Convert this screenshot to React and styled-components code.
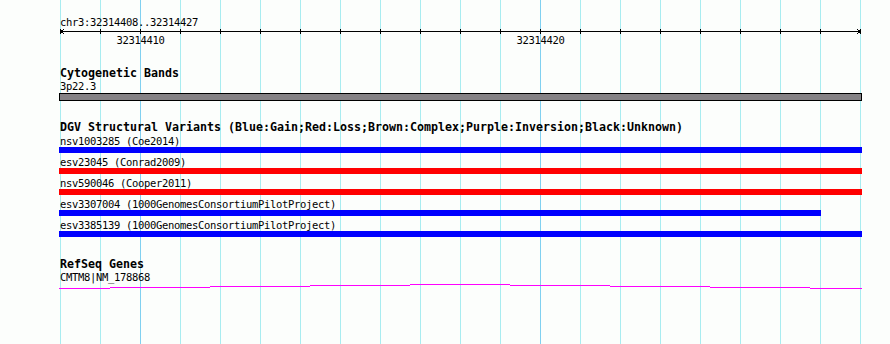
import React from 'react';
import styled, { createGlobalStyle } from 'styled-components';

const GlobalStyle = createGlobalStyle`
  html, body {
    margin: 0;
    padding: 0;
    background: #fcfefc;
  }
`;

const Page = styled.div`
  width: 890px;
  height: 344px;
  overflow: hidden;
  background: #fcfefc;
  font-family: "DejaVu Sans Mono", "Liberation Mono", monospace;
  color: #000;
`;

// the panel holds every track; grid lines at each 40px, major lines at the decade marks
const Panel = styled.div`
  margin-left: 59px;
  width: 803px;
  height: 344px;
  box-sizing: border-box;
  padding-top: 16px;
  background-image:
    linear-gradient(to right,
      transparent 81px, #80d0f0 81px, #80d0f0 82px, transparent 82px,
      transparent 481px, #80d0f0 481px, #80d0f0 482px, transparent 482px),
    repeating-linear-gradient(to right,
      transparent 0, transparent 1px, #a8ecf0 1px, #a8ecf0 2px, transparent 2px, transparent 40px);
  background-size: 100% 100%, 841px 100%;
  background-repeat: no-repeat;
`;

const Label = styled.div`
  font-size: 10.5px;
  letter-spacing: -0.32px;
  line-height: ${p => p.$lh || 13}px;
  height: ${p => p.$lh || 13}px;
  padding-left: 1px;
  white-space: pre;
`;

const Title = styled.div`
  font-size: 11.63px;
  font-weight: bold;
  line-height: 13px;
  height: 13px;
  padding-left: 1px;
  white-space: pre;
`;

const Ruler = styled.div`
  display: flex;
  flex-direction: column;
`;

const Axis = styled.svg`
  display: block;
  overflow: visible;
`;

const TickRow = styled.div`
  position: relative;
  height: 13px;
`;

const TickLabel = styled.span`
  position: absolute;
  top: 0;
  font-size: 10.5px;
  letter-spacing: -0.32px;
  line-height: 13px;
  transform: translateX(-50%);
  white-space: pre;
`;

const Track = styled.section`
  margin-top: ${p => p.$gap}px;
`;

const Band = styled.div`
  height: 8px;
  box-sizing: border-box;
  border: 1px solid #000;
  background: #858285;
`;

const VariantList = styled.div`
  margin-top: 1px;
  display: flex;
  flex-direction: column;
  gap: 3px;
`;

const Variant = styled.div`
  display: flex;
  flex-direction: column;
`;

const Bar = styled.div`
  height: 6px;
  background: ${p => p.$color};
`;

const GeneLine = styled.svg`
  display: block;
`;

const WIDTH = 803;
const ticks = Array.from({ length: 21 }, (_, i) => 1 + i * 40);

const variants = [
  { id: 'nsv1003285', study: 'Coe2014', color: '#0000ff', width: 803 },
  { id: 'esv23045', study: 'Conrad2009', color: '#ff0000', width: 803 },
  { id: 'nsv590046', study: 'Cooper2011', color: '#ff0000', width: 803 },
  { id: 'esv3307004', study: '1000GenomesConsortiumPilotProject', color: '#0000ff', width: 762 },
  { id: 'esv3385139', study: '1000GenomesConsortiumPilotProject', color: '#0000ff', width: 803 },
];

// intron hat of the gene, drawn as 1px steps
const steps = [[0, 51, 4], [51, 151, 3], [151, 251, 2], [251, 351, 1], [351, 451, 0],
  [451, 551, 1], [551, 651, 2], [651, 751, 3], [751, 803, 4]];

export default function App() {
  return (
    <Page>
      <GlobalStyle />
      <Panel>
        <Ruler>
          <Label>chr3:32314408..32314427</Label>
          <Axis width={WIDTH} height={5} shapeRendering="crispEdges">
            <line x1={1} y1={2.5} x2={801} y2={2.5} stroke="#000" strokeWidth={1} />
            {ticks.map(x => (
              <line key={x} x1={x + 0.5} y1={0} x2={x + 0.5} y2={5} stroke="#000" strokeWidth={1} />
            ))}
            <polyline points="5,0 2,2.5 5,5" fill="none" stroke="#000" strokeWidth={1} />
            <polyline points="798,0 801,2.5 798,5" fill="none" stroke="#000" strokeWidth={1} />
          </Axis>
          <TickRow>
            <TickLabel style={{ left: 81.5 }}>32314410</TickLabel>
            <TickLabel style={{ left: 481.5 }}>32314420</TickLabel>
          </TickRow>
        </Ruler>

        <Track $gap={20}>
          <Title>Cytogenetic Bands</Title>
          <Label>3p22.3</Label>
          <Band />
        </Track>

        <Track $gap={20}>
          <Title>DGV Structural Variants (Blue:Gain;Red:Loss;Brown:Complex;Purple:Inversion;Black:Unknown)</Title>
          <VariantList>
            {variants.map(v => (
              <Variant key={v.id}>
                <Label $lh={12}>{v.id} ({v.study})</Label>
                <Bar $color={v.color} style={{ width: v.width }} />
              </Variant>
            ))}
          </VariantList>
        </Track>

        <Track $gap={21}>
          <Title>RefSeq Genes</Title>
          <Label>CMTM8|NM_178868</Label>
          <GeneLine width={WIDTH} height={5} shapeRendering="crispEdges">
            {steps.map(([a, b, y]) => (
              <line key={a} x1={a} y1={y + 0.5} x2={b} y2={y + 0.5} stroke="#ff00ff" strokeWidth={1} />
            ))}
          </GeneLine>
        </Track>
      </Panel>
    </Page>
  );
}
